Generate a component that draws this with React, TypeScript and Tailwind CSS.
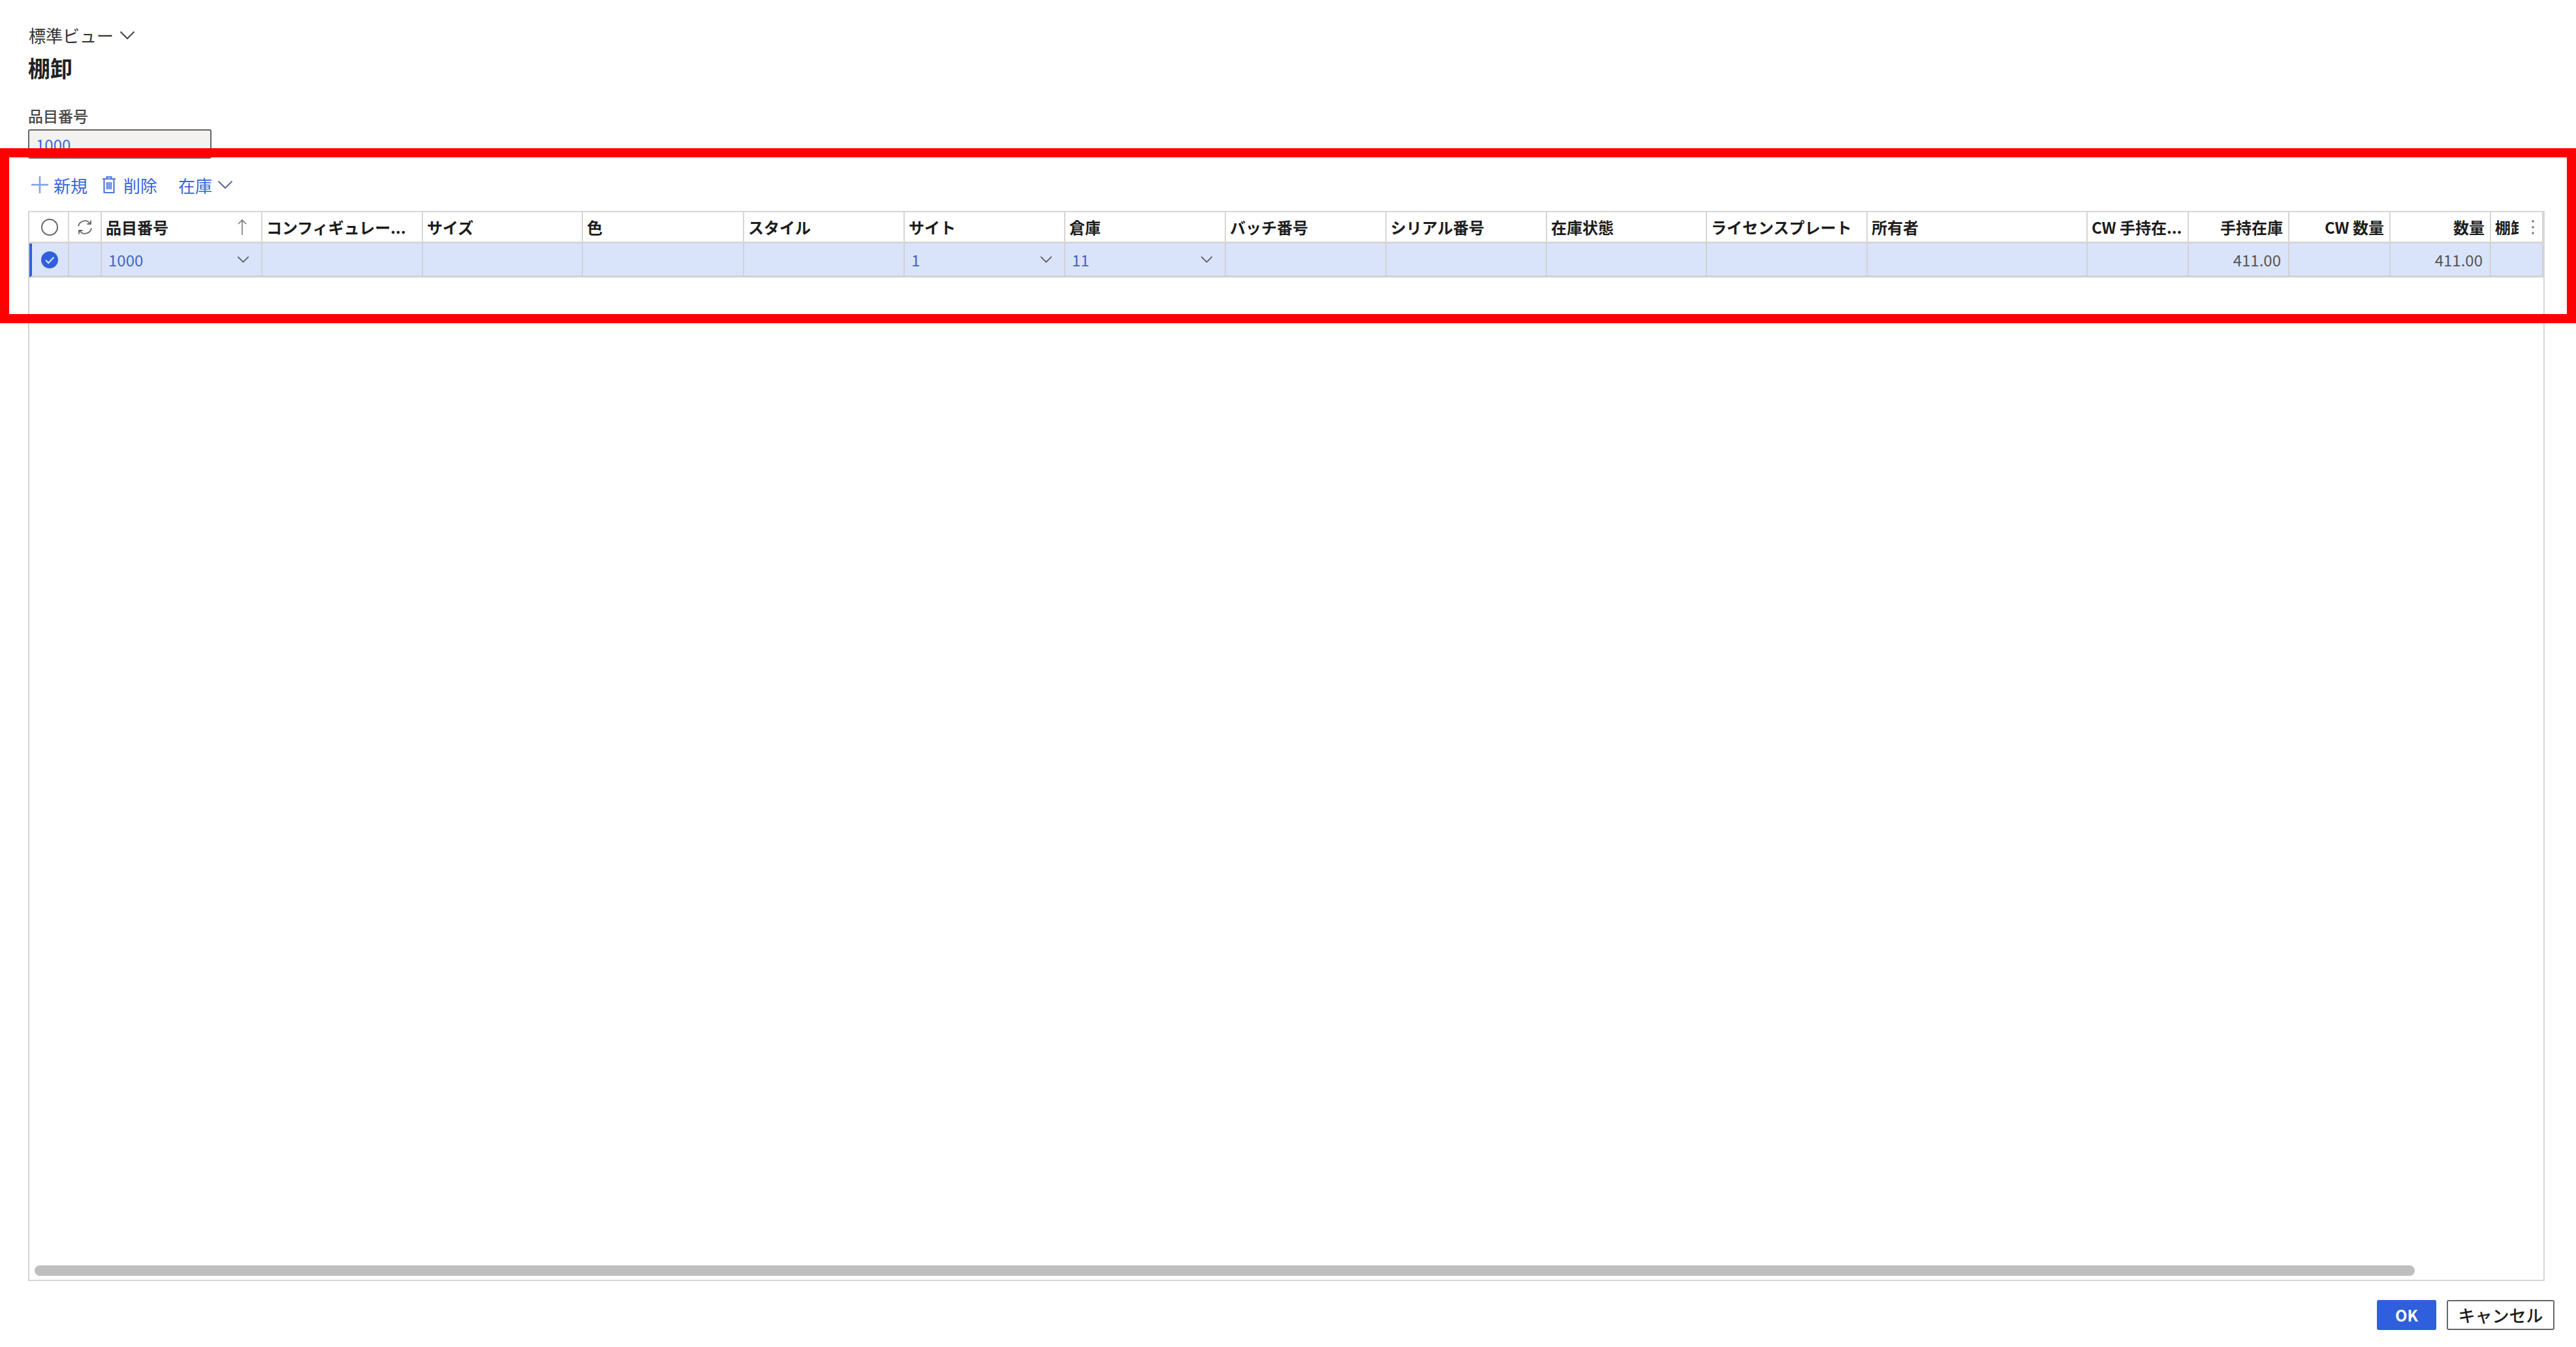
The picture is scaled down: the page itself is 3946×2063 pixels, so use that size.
import { ReactNode } from "react";

type Col = {
  label: string;
  right?: boolean;
  value?: string;
  link?: boolean;
  lookup?: boolean;
};

const columns: Col[] = [
  { label: "品目番号", value: "1000", link: true, lookup: true },
  { label: "コンフィギュレー..." },
  { label: "サイズ" },
  { label: "色" },
  { label: "スタイル" },
  { label: "サイト", value: "1", link: true, lookup: true },
  { label: "倉庫", value: "11", link: true, lookup: true },
  { label: "バッチ番号" },
  { label: "シリアル番号" },
  { label: "在庫状態" },
  { label: "ライセンスプレート" },
  { label: "所有者" },
  { label: "CW 手持在..." },
  { label: "手持在庫", right: true, value: "411.00" },
  { label: "CW 数量", right: true },
  { label: "数量", right: true, value: "411.00" },
];

const gridCols =
  "grid grid-cols-[61px_50px_246px_246px_245px_247px_246px_246px_246px_246px_246px_245px_246px_337px_155px_154px_155px_154px_80px]";

function Chevron({ className }: { className: string }) {
  return (
    <svg viewBox="0 0 24 14" fill="none" stroke="currentColor" strokeWidth="2" className={className}>
      <path d="M1.5 1.5 12 12 22.5 1.5" />
    </svg>
  );
}

function HeaderCell({ children, className = "" }: { children: ReactNode; className?: string }) {
  return (
    <div className={`flex h-[48px] items-center border-r-2 border-b-3 border-[#d6d6d6] ${className}`}>
      {children}
    </div>
  );
}

function RowCell({ children, className = "" }: { children?: ReactNode; className?: string }) {
  return (
    <div className={`flex h-[52px] items-center border-r-2 border-b-3 border-[#d2d2d2] bg-[#d9e4fa] ${className}`}>
      {children}
    </div>
  );
}

export default function App() {
  return (
    <div className="relative flex h-screen flex-col overflow-hidden bg-white pr-[48px] pl-[43px] font-['Noto_Sans_CJK_JP',sans-serif] text-[24px] text-[#222]">
      {/* help button, cut off by the top of the dialog */}
      <div className="flex h-[34px] justify-end overflow-hidden">
        <span className="mt-[-24px] mr-[-14px] text-[30px] leading-[44px] text-[#888] italic">?</span>
      </div>

      <div className="flex h-[40px] items-center gap-[9px] pl-[1px] text-[26px] leading-none text-[#333]">
        <span>標準ビュー</span>
        <Chevron className="h-[14px] w-[24px] text-[#444]" />
      </div>
      <h1 className="mt-[5px] h-[50px] text-[34px] leading-[50px] font-bold text-[#222]">棚卸</h1>

      <label className="mt-[32px] h-[32px] text-[23px] leading-[32px] font-medium text-[#444]">品目番号</label>
      <div className="mt-[5px] h-[45px] w-[281px] rounded-[3px] border-2 border-[#666] bg-[#f3f2f1] pl-[10px] text-[24px] leading-[41px] text-[#3f67d8]">
        1000
      </div>

      <div className="flex h-[80px] items-center pl-[5px] text-[26px] text-[#3a66dc]">
        <svg viewBox="0 0 26 26" fill="none" stroke="#7f9fe8" strokeWidth="2.5" className="h-[26px] w-[26px]">
          <path d="M13 0v26M0 13h26" />
        </svg>
        <span className="ml-[8px]">新規</span>
        <svg viewBox="0 0 20 26" fill="none" stroke="#4f78e0" strokeWidth="2.2" className="ml-[23px] h-[26px] w-[20px]">
          <path d="M0 4h20M6.5 4V1h7v3M2.5 4v21h15V4M7 9v11M10 9v11M13 9v11" />
        </svg>
        <span className="ml-[12px]">削除</span>
        <span className="ml-[32px]">在庫</span>
        <Chevron className="ml-[8px] h-[14px] w-[24px] text-[#5a6a90]" />
      </div>

      <div className="flex h-[1639px] flex-col border-2 border-[#d6d6d6]">
        <div className={gridCols}>
          <HeaderCell className="justify-center pl-[2px]">
            <span className="h-[26px] w-[26px] rounded-full border-2 border-[#666]" />
          </HeaderCell>
          <HeaderCell className="justify-center">
            <svg viewBox="0 0 24 24" fill="none" stroke="#666" strokeWidth="1.8" className="h-[24px] w-[24px]">
              <path d="M2 10.5A10 10 0 0 1 20 6.5M21 1.5v5.5h-5.5M22 13.5A10 10 0 0 1 4 17.5M3 22.5V17h5.5" />
            </svg>
          </HeaderCell>
          {columns.map((col, i) => (
            <HeaderCell
              key={col.label}
              className={`font-bold whitespace-nowrap ${col.right ? "justify-end pr-[8px]" : "pl-[6px]"} ${
                i === 0 ? "justify-between pr-[22px]" : ""
              }`}
            >
              <span className="text-[24px] leading-none text-[#1c1c1c]">{col.label}</span>
              {i === 0 && (
                <svg viewBox="0 0 14 24" fill="none" stroke="#777" strokeWidth="1.6" className="h-[24px] w-[14px]">
                  <path d="M7 24V1M1 7l6-6 6 6" />
                </svg>
              )}
            </HeaderCell>
          ))}
          <HeaderCell className="justify-between border-r-0 pr-[12px] pl-[6px] font-bold">
            <span className="w-[36px] overflow-hidden leading-none whitespace-nowrap text-[#1c1c1c]">棚卸</span>
            <svg viewBox="0 0 4 24" fill="#777" className="h-[24px] w-[4px]">
              <circle cx="2" cy="3" r="1.8" />
              <circle cx="2" cy="12" r="1.8" />
              <circle cx="2" cy="21" r="1.8" />
            </svg>
          </HeaderCell>

          <RowCell className="justify-center border-l-4 border-l-[#2f5fdc] pr-[2px]">
            <svg viewBox="0 0 26 26" className="h-[26px] w-[26px]">
              <circle cx="13" cy="13" r="13" fill="#2f5fdc" />
              <path d="M7 13.5l4.2 4.2L19.5 9" fill="none" stroke="#dfe8fb" strokeWidth="2" />
            </svg>
          </RowCell>
          <RowCell />
          {columns.map((col) => (
            <RowCell
              key={col.label}
              className={`${col.right ? "justify-end pr-[11px]" : "pl-[10px]"} ${
                col.lookup ? "justify-between pr-[18px]" : ""
              }`}
            >
              {col.value && (
                <span className={`text-[24px] leading-none ${col.link ? "text-[#4465c4]" : "text-[#555]"}`}>
                  {col.value}
                </span>
              )}
              {col.lookup && <Chevron className="h-[11px] w-[19px] text-[#555]" />}
            </RowCell>
          ))}
          <RowCell className="border-r-0" />
        </div>

        <div className="flex-1" />
        <div className="mb-[6px] ml-[8px] h-[16px] w-[3646px] rounded-full bg-[#bfbfbf]" />
      </div>

      <div className="mt-[29px] flex justify-end gap-[16px]">
        <button className="h-[46px] w-[91px] rounded-[3px] bg-[#2f5fdc] text-[24px] font-bold text-white">OK</button>
        <button className="mr-[-15px] h-[46px] w-[165px] rounded-[3px] border-2 border-[#666] bg-white text-[26px] leading-none font-medium text-[#1c1c1c]">
          キャンセル
        </button>
      </div>

      {/* red annotation frame drawn over the screenshot */}
      <div className="pointer-events-none absolute top-[227px] left-0 h-[268px] w-full border-[14px] border-[#ff0000]" />
    </div>
  );
}
